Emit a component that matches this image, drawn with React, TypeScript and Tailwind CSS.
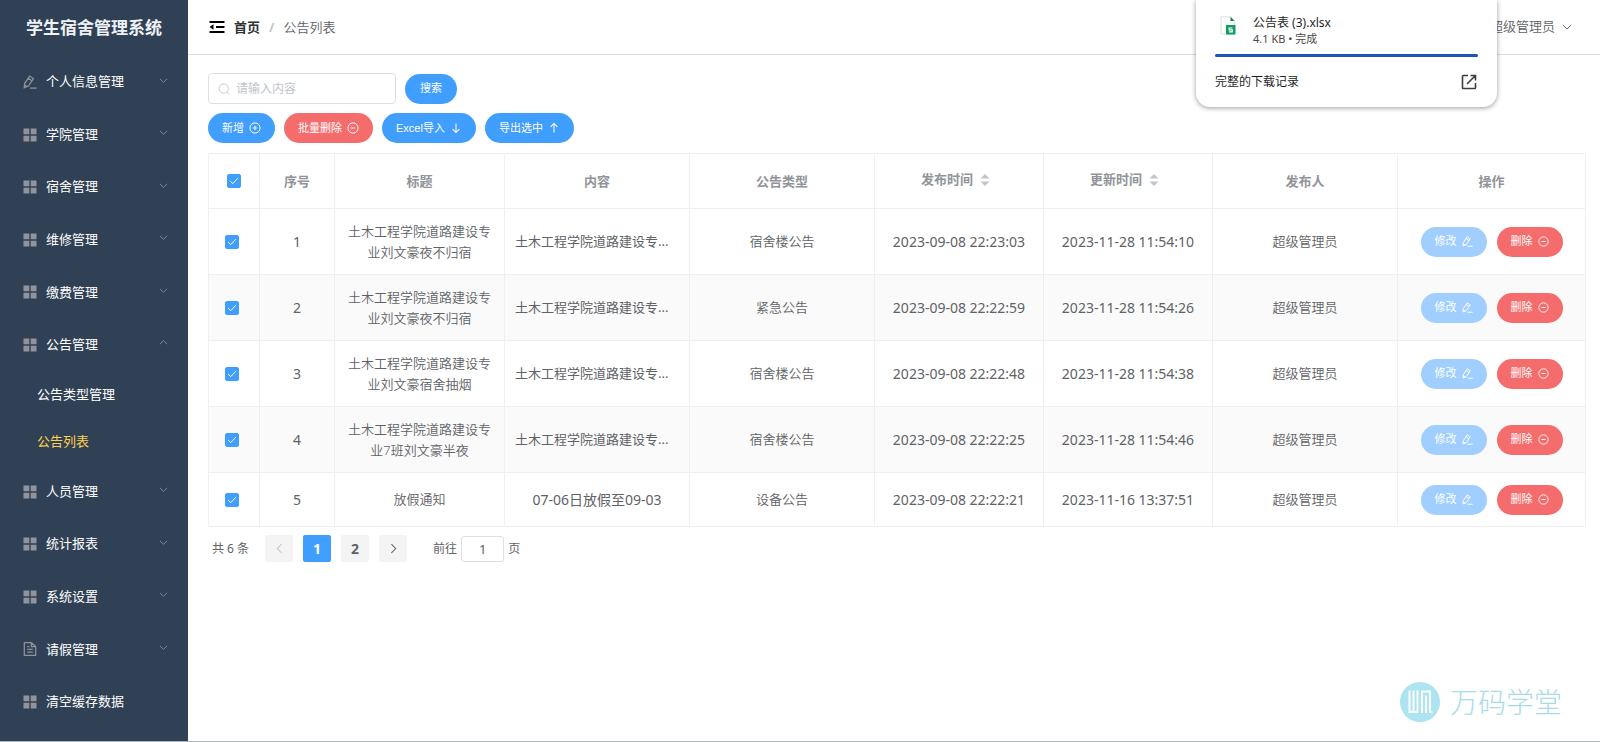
import { useState, type ReactNode } from "react";

type IconProps = { className?: string };

const Stroke = ({ className, width = 1, children }: IconProps & { width?: number; children: ReactNode }) => (
  <svg viewBox="0 0 16 16" className={className} fill="none" stroke="currentColor" strokeWidth={width} aria-hidden="true">
    {children}
  </svg>
);

const GridIcon = ({ className }: IconProps) => (
  <svg viewBox="0 0 14 14" className={className} fill="currentColor" aria-hidden="true">
    <path d="M0.5 0.5h5.8v5.8H0.5zM7.7 0.5h5.8v5.8H7.7zM0.5 7.7h5.8v5.8H0.5zM7.7 7.7h5.8v5.8H7.7z" />
  </svg>
);
const EditIcon = ({ className }: IconProps) => (
  <Stroke className={className} width={1.4}>
    <path d="M1.4 14.6 1.8 9.8 7.6 1.2 12 4.1 6.2 12.7zM6 3.8l4.3 2.9M1.6 11.2l3.2 2.2M8 14.9h7.6" />
  </Stroke>
);
const DocIcon = ({ className }: IconProps) => (
  <Stroke className={className} width={1.4}>
    <path d="M1.5 .8h8.1L14.5 5.2v10H1.5zM9.6.8v4.4h4.9M4.8 5.4h2.4M4.8 8.4h6.4M4.8 11.6h6.4" />
  </Stroke>
);
const FoldIcon = ({ className }: IconProps) => (
  <svg viewBox="0 0 16 14" className={className} fill="currentColor" aria-hidden="true">
    <path d="M0.5 1h15v2H0.5zM7 6h8.5v2H7zM0.5 11h15v2H0.5zM0.5 7 4.5 4.2V9.8z" />
  </svg>
);
const Chevron = ({ className }: IconProps) => (
  <Stroke className={className} width={1.5}>
    <path d="M1.5 5 8 11.2 14.5 5" />
  </Stroke>
);
const SearchIcon = ({ className }: IconProps) => (
  <Stroke className={className} width={1.2}>
    <circle cx="7.6" cy="7.4" r="6.2" />
    <path d="m12 12 3 3" />
  </Stroke>
);
const PlusCircle = ({ className }: IconProps) => (
  <Stroke className={className} width={1.3}>
    <circle cx="8" cy="8" r="6.8" />
    <path d="M8 5v6M5 8h6" />
  </Stroke>
);
const MinusCircle = ({ className }: IconProps) => (
  <Stroke className={className} width={1.3}>
    <circle cx="8" cy="8" r="6.8" />
    <path d="M5 8h6" />
  </Stroke>
);
const ArrowDown = ({ className }: IconProps) => (
  <Stroke className={className} width={1.4}>
    <path d="M8 2v12M3.5 9.5 8 14l4.5-4.5" />
  </Stroke>
);
const ArrowUp = ({ className }: IconProps) => (
  <Stroke className={className} width={1.4}>
    <path d="M8 14V2M3.5 6.500 8 2l4.500 4.500" />
  </Stroke>
);
const SortCarets = () => (
  <svg viewBox="0 0 10 14" className="h-[14px] w-[10px] text-[#c0c4cc]" fill="currentColor" aria-hidden="true">
    <path d="M0.5 5.5 5 1l4.5 4.5zM0.5 8.5h9L5 13z" />
  </svg>
);

const menu = [
  { label: "个人信息管理", icon: EditIcon, arrow: true },
  { label: "学院管理", icon: GridIcon, arrow: true },
  { label: "宿舍管理", icon: GridIcon, arrow: true },
  { label: "维修管理", icon: GridIcon, arrow: true },
  { label: "缴费管理", icon: GridIcon, arrow: true },
  { label: "公告管理", icon: GridIcon, arrow: true, children: ["公告类型管理", "公告列表"] },
  { label: "人员管理", icon: GridIcon, arrow: true },
  { label: "统计报表", icon: GridIcon, arrow: true },
  { label: "系统设置", icon: GridIcon, arrow: true },
  { label: "请假管理", icon: DocIcon, arrow: true },
  { label: "清空缓存数据", icon: GridIcon, arrow: false },
];

const rows = [
  { id: 1, title: "土木工程学院道路建设专业刘文豪夜不归宿", content: "土木工程学院道路建设专...", type: "宿舍楼公告", created: "2023-09-08 22:23:03", updated: "2023-11-28 11:54:10" },
  { id: 2, title: "土木工程学院道路建设专业刘文豪夜不归宿", content: "土木工程学院道路建设专...", type: "紧急公告", created: "2023-09-08 22:22:59", updated: "2023-11-28 11:54:26" },
  { id: 3, title: "土木工程学院道路建设专业刘文豪宿舍抽烟", content: "土木工程学院道路建设专...", type: "宿舍楼公告", created: "2023-09-08 22:22:48", updated: "2023-11-28 11:54:38" },
  { id: 4, title: "土木工程学院道路建设专业7班刘文豪半夜", content: "土木工程学院道路建设专...", type: "宿舍楼公告", created: "2023-09-08 22:22:25", updated: "2023-11-28 11:54:46" },
  { id: 5, title: "放假通知", content: "07-06日放假至09-03", type: "设备公告", created: "2023-09-08 22:22:21", updated: "2023-11-16 13:37:51" },
];

function Sidebar() {
  return (
    <aside className="flex w-[188px] shrink-0 flex-col bg-[#304156] pb-[13px] text-[13px] text-white">
      <h1 className="flex h-14 items-center justify-center text-[17px] font-bold text-[#eef1f6]">学生宿舍管理系统</h1>
      <nav className="flex flex-1">
        <ul className="flex flex-1 flex-col justify-between">
          {menu.map(({ label, icon: Icon, arrow, children }) => (
            <li key={label}>
              <button type="button" aria-expanded={arrow ? !!children : undefined} className="flex h-[52px] w-full items-center pr-5 pl-[23px]">
                <Icon className="size-[14px] text-[#909399]" />
                <span className="ml-[9px]">{label}</span>
                {arrow && <Chevron className={children ? "mb-1 ml-auto size-[9px] rotate-180 text-[#909399]" : "mb-1 ml-auto size-[9px] text-[#909399]"} />}
              </button>
              {children && (
                <ul>
                  {children.map((c) => (
                    <li key={c}>
                      <a href="#" className={c === "公告列表" ? "flex h-[47px] items-center pl-[37px] text-[#ffd04b]" : "flex h-[47px] items-center pl-[37px]"}>
                        {c}
                      </a>
                    </li>
                  ))}
                </ul>
              )}
            </li>
          ))}
        </ul>
      </nav>
    </aside>
  );
}

function Check({ label, checked, onChange }: { label: string; checked: boolean; onChange: () => void }) {
  return (
    <span className="mb-[2px] inline-grid place-items-center align-middle">
      <input
        type="checkbox"
        aria-label={label}
        checked={checked}
        onChange={onChange}
        className="col-start-1 row-start-1 size-[14px] appearance-none rounded-xs border border-[#dcdfe6] bg-white checked:border-[#409eff] checked:bg-[#409eff]"
      />
      <svg viewBox="0 0 14 14" className="pointer-events-none col-start-1 row-start-1 size-[14px] text-white" fill="none" stroke="currentColor" aria-hidden="true">
        <path d="M3.2 7.2 5.8 9.6 10.8 4.2" />
      </svg>
    </span>
  );
}

function Pill({ tone, disabled, children }: { tone: string; disabled?: boolean; children: ReactNode }) {
  return (
    <button
      type="button"
      disabled={disabled}
      className={`flex h-[30px] items-center gap-[5px] rounded-full px-[14px] font-['Liberation_Sans','Noto_Sans_CJK_SC',sans-serif] text-[11px] whitespace-nowrap text-white ${tone}`}
    >
      {children}
    </button>
  );
}

const cell = "border border-[#edeff3] px-[10px]";
const cjk = `${cell} font-[350]`;
const digits = `${cell} text-[14px] whitespace-nowrap`;

function NoticeTable() {
  const [picked, setPicked] = useState<number[]>(rows.map((r) => r.id));
  const all = picked.length === rows.length;
  const toggle = (id: number) => setPicked((p) => (p.includes(id) ? p.filter((x) => x !== id) : [...p, id]));
  return (
    <table className="mt-[10px] w-full table-fixed border-collapse text-center text-[13px] leading-[21px] text-[#606266]">
      <colgroup>
        <col className="w-[51px]" />
        <col className="w-[75px]" />
        <col className="w-[170px]" />
        <col className="w-[185px]" />
        <col className="w-[185px]" />
        <col className="w-[169px]" />
        <col className="w-[169px]" />
        <col className="w-[185px]" />
        <col className="w-[188px]" />
      </colgroup>
      <thead className="text-[#909399]">
        <tr className="h-[55px]">
          <th className="border border-[#edeff3]">
            <Check label="全选" checked={all} onChange={() => setPicked(all ? [] : rows.map((r) => r.id))} />
          </th>
          <th className={cell}>序号</th>
          <th className={cell}>标题</th>
          <th className={cell}>内容</th>
          <th className={cell}>公告类型</th>
          {["发布时间", "更新时间"].map((t) => (
            <th key={t} className="border border-[#edeff3] pr-[17px] pb-[3px] pl-[10px]">
              <button type="button" className="inline-flex items-center gap-[7px] align-middle font-bold">
                {t}
                <SortCarets />
              </button>
            </th>
          ))}
          <th className={cell}>发布人</th>
          <th className={cell}>操作</th>
        </tr>
      </thead>
      <tbody>
        {rows.map((r) => (
          <tr key={r.id} className={r.id === 5 ? "h-[54px]" : "h-[66px] even:bg-[#fafafa]"}>
            <td className="border border-[#edeff3] pr-1">
              <Check label={`选择第${r.id}行`} checked={picked.includes(r.id)} onChange={() => toggle(r.id)} />
            </td>
            <td className={digits}>{r.id}</td>
            <td className={cjk}>{r.title}</td>
            <td className={r.id === 5 ? digits : `${cell} text-left`}>{r.content}</td>
            <td className={cjk}>{r.type}</td>
            <td className={digits}>{r.created}</td>
            <td className={digits}>{r.updated}</td>
            <td className={cjk}>超级管理员</td>
            <td className={cell}>
              <div className="flex justify-center gap-[10px]">
                <Pill tone="bg-[#a0cfff]" disabled>
                  修改
                  <EditIcon className="size-[11px]" />
                </Pill>
                <Pill tone="bg-[#f56c6c]">
                  删除
                  <MinusCircle className="size-[11px]" />
                </Pill>
              </div>
            </td>
          </tr>
        ))}
      </tbody>
    </table>
  );
}

function Pagination() {
  return (
    <div className="mt-2 flex h-[27px] items-center pl-1 text-[12px] text-[#606266]">
      <span>共 6 条</span>
      <div className="ml-4 flex gap-[10px] text-[14px] font-bold">
        <button type="button" disabled aria-label="上一页" className="grid h-[27px] w-7 place-items-center rounded-xs bg-[#f4f4f5] text-[#c0c4cc]">
          <Chevron className="size-[11px] rotate-90" />
        </button>
        <button type="button" className="h-[27px] w-7 rounded-xs bg-[#409eff] text-white">1</button>
        <button type="button" className="h-[27px] w-7 rounded-xs bg-[#f4f4f5]">2</button>
        <button type="button" aria-label="下一页" className="grid h-[27px] w-7 place-items-center rounded-xs bg-[#f4f4f5]">
          <Chevron className="size-[11px] -rotate-90" />
        </button>
      </div>
      <label className="ml-[26px] flex items-center gap-1">
        前往
        <input type="text" defaultValue="1" className="h-[26px] w-[43px] rounded-[3px] border border-[#dcdfe6] text-center text-[13px]" />
        页
      </label>
    </div>
  );
}

function DownloadPopup() {
  return (
    <section aria-label="下载" className="absolute top-0 right-[103px] w-[301px] rounded-b-[14px] bg-white px-[19px] pt-[14px] pb-[15px] text-[#1f1f1f] shadow-[0_1px_5px_rgba(0,0,0,0.4)]">
      <div className="flex h-[34px] items-start">
        <svg viewBox="0 0 16 20" className="mt-[2px] ml-[5px] h-5 w-4" aria-hidden="true">
          <path d="M1 .8h9.5L14.5 5v13H1z" fill="#fff" stroke="#d5d8db" strokeWidth=".8" />
          <path d="M10.5.8V5h4z" fill="#188058" />
          <path d="M6 9h9.5v9.5H6z" fill="#109d63" />
          <path d="M12.4 12H9.2v1.8h3.1v2.1H9" fill="none" stroke="#fff" strokeWidth="1.2" />
        </svg>
        <div className="ml-[17px]">
          <p className="text-[12px] leading-[18px]">公告表 (3).xlsx</p>
          <p className="text-[11px] leading-[14px] text-[#474747]">4.1 KB • 完成</p>
        </div>
      </div>
      <div className="mt-[6px] h-[3px] rounded-full bg-[#1a57b5]" />
      <a href="#" className="mt-[15px] flex h-5 items-center justify-between text-[12px]">
        完整的下载记录
        <svg viewBox="0 0 16 16" className="mr-px size-4" fill="none" stroke="#3c3c3c" strokeWidth="1.6" aria-hidden="true">
          <path d="M7 1.5H2.2a.7.7 0 0 0-.7.7v11.6c0 .4.3.7.7.7h11.6c.4 0 .7-.3.7-.7V9M9.5 1.5h5v5M14.2 1.8 6 10" />
        </svg>
      </a>
    </section>
  );
}

export default function App() {
  return (
    <div className="relative flex min-h-screen border-b border-[#a9b6be] bg-white font-['Noto_Sans','Noto_Sans_CJK_SC',sans-serif]">
      <Sidebar />
      <div className="flex min-w-0 flex-1 flex-col">
        <header className="flex h-[55px] items-center border-b border-[#dcdfe3] pr-7 pl-[21px] text-[13px]">
          <button type="button" aria-label="收起菜单">
            <FoldIcon className="h-[14px] w-4 text-black" />
          </button>
          <nav aria-label="面包屑" className="ml-[9px] flex items-center gap-[9px] pt-px">
            <a href="#" className="font-bold text-[#303133]">首页</a>
            <span className="font-bold text-[#c0c4cc]">/</span>
            <span className="font-[350] text-[#606266]">公告列表</span>
          </nav>
          <button type="button" className="ml-auto flex items-center gap-[7px] font-[350] text-[#606266]">
            超级管理员
            <Chevron className="size-[10px]" />
          </button>
        </header>
        <main className="pt-[18px] pr-[14px] pl-5">
          <form className="flex items-center gap-[9px]" onSubmit={(e) => e.preventDefault()}>
            <label className="flex h-[31px] w-[188px] items-center gap-[6px] rounded-[4px] border border-[#dcdfe6] px-[9px] text-[#c0c4cc]">
              <SearchIcon className="size-3 shrink-0" />
              <input type="search" aria-label="搜索内容" placeholder="请输入内容" className="min-w-0 flex-1 text-[12px] text-[#606266] outline-none placeholder:text-[#c0c4cc]" />
            </label>
            <button type="submit" className="h-[30px] rounded-full bg-[#409eff] px-[15px] text-[11px] text-white">搜索</button>
          </form>
          <div className="mt-[9px] flex gap-[9px]">
            <Pill tone="bg-[#409eff]">
              新增
              <PlusCircle className="size-3" />
            </Pill>
            <Pill tone="bg-[#f56c6c]">
              批量删除
              <MinusCircle className="size-3" />
            </Pill>
            <Pill tone="bg-[#409eff]">
              Excel导入
              <ArrowDown className="size-3" />
            </Pill>
            <Pill tone="bg-[#409eff]">
              导出选中
              <ArrowUp className="size-3" />
            </Pill>
          </div>
          <NoticeTable />
          <Pagination />
        </main>
      </div>
      <DownloadPopup />
      <div className="absolute right-[38px] bottom-[19px] flex items-center gap-[10px]">
        <svg viewBox="0 0 40 40" className="size-10" aria-hidden="true">
          <circle cx="20" cy="20" r="20" fill="#ade4f1" />
          <path d="M9.5 8.5V30h8V8.5M13.5 8.5V30M22 31V9.5h8V31M26 31V13.5M30 30.2h2.5" fill="none" stroke="#fff" strokeWidth="1.9" />
        </svg>
        <span className="text-[28px] leading-10 font-light text-[#a9dbe9]">万码学堂</span>
      </div>
    </div>
  );
}
